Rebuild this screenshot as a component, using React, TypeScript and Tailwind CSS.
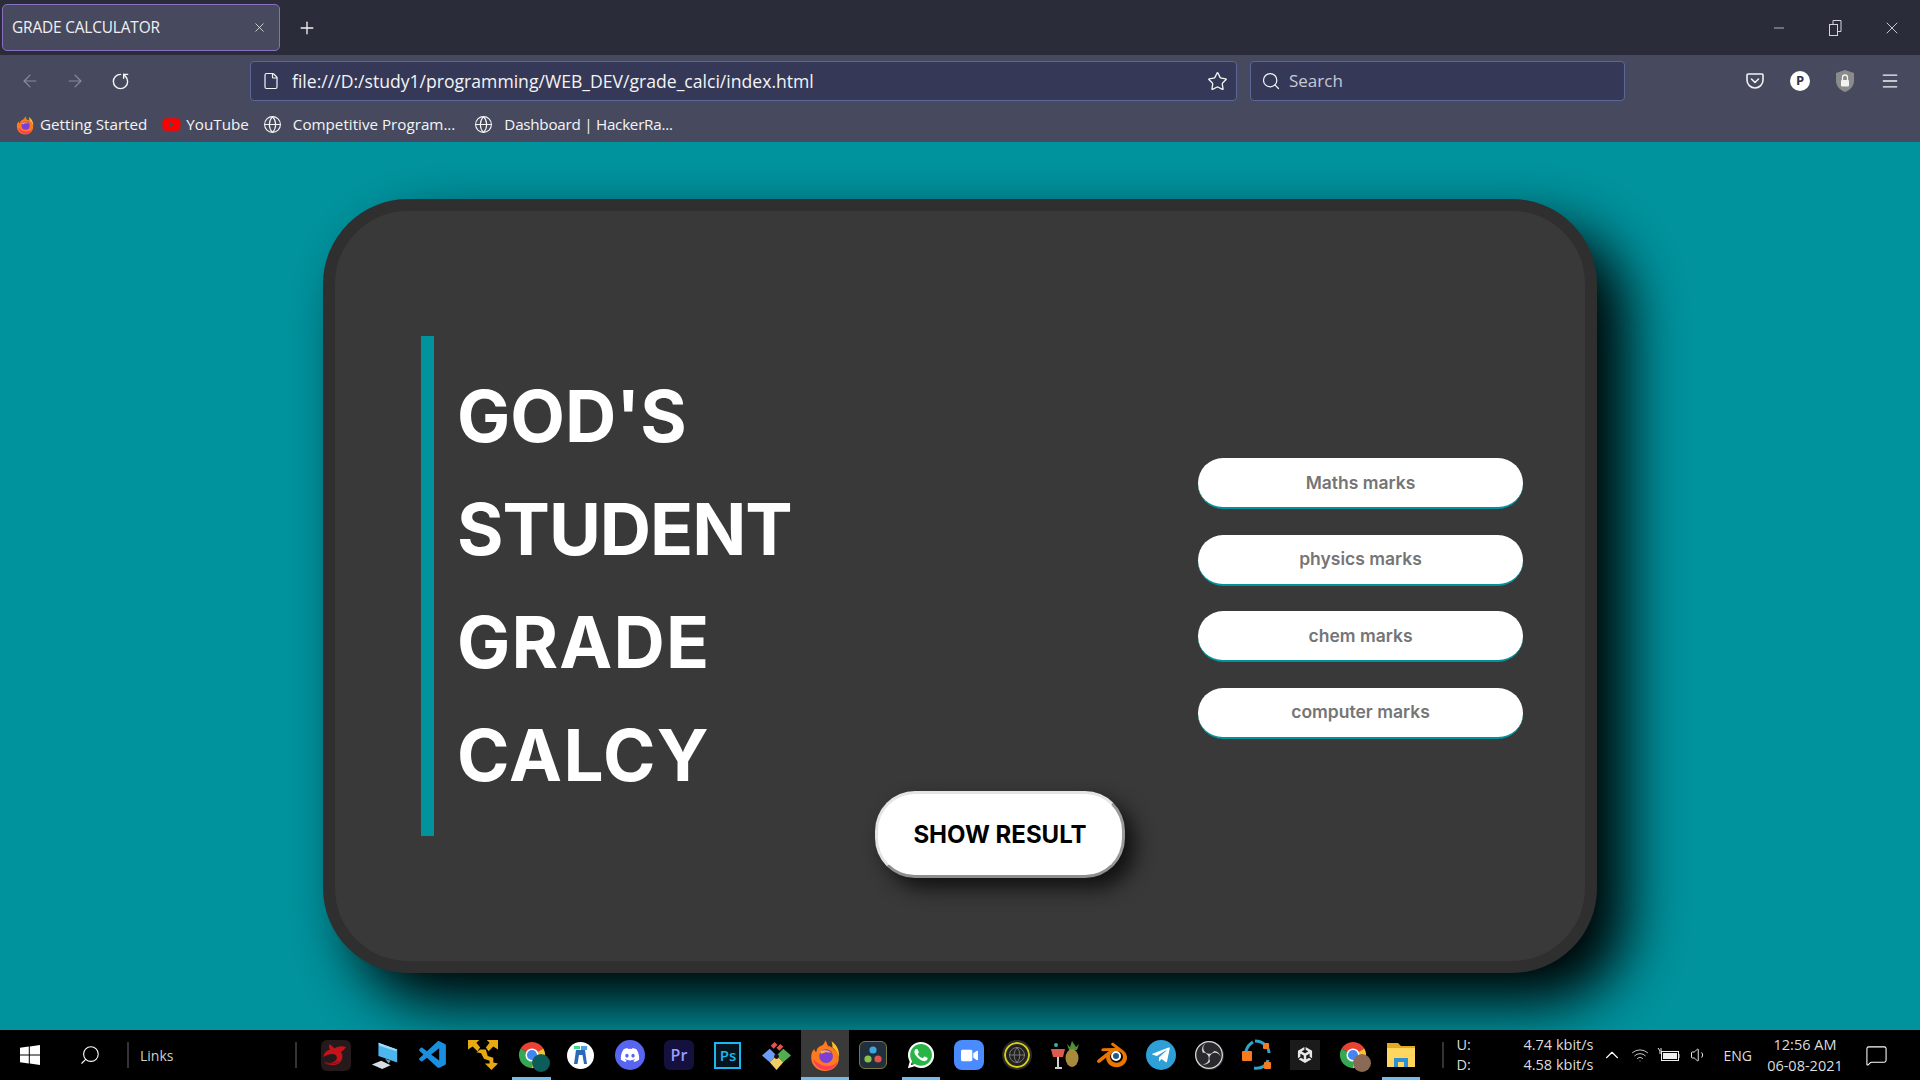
import { ArrowLeft, ArrowRight, RotateCw, File, Star, Search, Menu, Plus, X, Minus, Globe, ChevronUp, Wifi, Volume1, MessageSquare } from "lucide-react";
import { FaDiscord, FaWhatsapp, FaTelegramPlane, FaVideo, FaYoutube } from "react-icons/fa";
import { SiObsstudio, SiBlender, SiUnity } from "react-icons/si";
import { VscVscode } from "react-icons/vsc";

const uiFont = "font-['Open_Sans','Noto_Sans',sans-serif]";
const pageFont = "font-['Inter','Noto_Sans',sans-serif]";

const FirefoxIcon = ({ size = 34 }: { size?: number }) => (
  <svg width={size} height={size} viewBox="0 0 32 32">
    <path d="M16 2c3 3 1 5 5 6 4 2 8 6 8 11 0 7-6 12-13 12S3 26 3 18c0-3 1-6 3-8 0 2 1 3 2 3 0-4 3-5 5-6 2-1 3-3 3-5z" fill="#ff7a1f" />
    <path d="M22 3c5 3 8 9 7 15-1-4-3-7-6-9 0-2 0-4-1-6z" fill="#ffbd2e" />
    <path d="M5 20c1 6 6 10 12 10 5 0 9-3 11-8-3 4-8 5-13 4-4-1-7-3-10-6z" fill="#ff3d5a" />
    <circle cx="17" cy="17" r="6.5" fill="#7b3fd6" />
    <path d="M11 13c3-2 8-2 11 1-3-1-7-1-9 1z" fill="#ffb02e" />
  </svg>
);

const ChromeIcon = ({ badge }: { badge: string }) => (
  <div className="relative h-[30px] w-[30px]">
    <svg width="30" height="30" viewBox="0 0 32 32">
      <path d="M16 16 L3.9 9 A14 14 0 0 1 28.1 9 Z" fill="#ea4335" />
      <path d="M16 16 L28.1 9 A14 14 0 0 1 16 30 Z" fill="#fbc02d" />
      <path d="M16 16 L16 30 A14 14 0 0 1 3.9 9 Z" fill="#34a853" />
      <circle cx="16" cy="16" r="7" fill="#fff" />
      <circle cx="16" cy="16" r="5.4" fill="#4285f4" />
    </svg>
    <div className={`absolute bottom-[-2px] right-[-3px] h-[18px] w-[18px] rounded-full ${badge}`} />
  </div>
);

const MsiIcon = () => (
  <div className="flex h-[31px] w-[30px] items-center justify-center rounded-md bg-[#26191b]">
    <svg width="27" height="28" viewBox="0 0 24 26">
      <path d="M6 3c3 1 4 3 5 4 3-2 7-3 11-1-2 1-2 3-5 4 2 3 2 7-1 10-3 3-9 3-13 1 4 0 8-1 10-4 1-3-1-5-4-5-3 0-6 1-8 3 0-4 3-6 6-7C6 7 6 5 6 3z" fill="#c5131c" />
      <path d="M2 20c5 2 10 1 13-1" fill="none" stroke="#8c1016" strokeWidth="1.4" />
    </svg>
  </div>
);

const ComputerIcon = () => (
  <svg width="30" height="30" viewBox="0 0 32 32">
    <path d="M9 3l20 7v14L9 17z" fill="#4cb6ef" />
    <path d="M9 3l20 7-1 2L10 6z" fill="#9fdcf8" />
    <path d="M16 20l6 2-2 3z" fill="#8b9aa5" />
    <path d="M2 26l10-4 10 5-9 4z" fill="#d7dde2" />
  </svg>
);

const YellowArrowsIcon = () => (
  <svg width="30" height="30" viewBox="0 0 32 32" fill="#e6a912">
    <path d="M0 0h12l-3 3 4 5-3 4-5-5-5 3zM32 0H20l3 3-4 5 3 4 5-5 5 3zM13 10h6l2 7 6 2v5l5 1-7 7-7-7h5v-3l-6-2-3-6-5-1z" />
  </svg>
);

const WriterIcon = () => (
  <div className="flex h-[27px] w-[27px] items-center justify-center rounded-full bg-white">
    <svg width="17" height="20" viewBox="0 0 17 20">
      <path d="M2 1h6v3H2z" fill="#3ddc84" />
      <path d="M9 1h6v4H9z" fill="#4fa0e0" />
      <path d="M4 5h9l2 14h-3l-1.500-9h-3.500l-1.500 9H2z" fill="#2a69b5" />
    </svg>
  </div>
);

const DiscordIcon = () => (
  <div className="flex h-[30px] w-[30px] items-center justify-center rounded-full bg-[#5865f2]">
    <FaDiscord size={20} color="#fff" />
  </div>
);

const PremiereIcon = () => (
  <div className={`flex h-[30px] w-[30px] items-center justify-center rounded-md bg-[#14113e] text-[16px] font-semibold text-[#9c9cff] ${uiFont}`}>Pr</div>
);

const PhotoshopIcon = () => (
  <div className={`flex h-[27px] w-[27px] items-center justify-center border-2 border-[#1fb6ef] bg-[#04141f] text-[15px] font-semibold text-[#1fb6ef] ${uiFont}`}>Ps</div>
);

const GitKrakenIcon = () => (
  <svg width="31" height="31" viewBox="0 0 32 32">
    <path d="M9 9l7 7-7 7-8-7z" fill="#6d9cf5" />
    <path d="M23 9l8 7-8 7-7-7z" fill="#4fae4f" />
    <path d="M9 23l7-7 7 7-7 8z" fill="#f2ce6a" />
    <path d="M10 6l4-4 3 3-4 4zM16 8l4-4 3 3-4 4z" fill="#e2534f" />
    <circle cx="16" cy="17" r="2.5" fill="#111" />
  </svg>
);

const ResolveIcon = () => (
  <div className="flex h-[28px] w-[28px] items-center justify-center rounded-md border border-[#7a7a3a] bg-[#21303c]">
    <svg width="20" height="20" viewBox="0 0 20 20">
      <circle cx="10" cy="5" r="3.6" fill="#3aa7e0" />
      <circle cx="5" cy="14" r="3.6" fill="#8bc34a" />
      <circle cx="15" cy="14" r="3.6" fill="#e2534f" />
    </svg>
  </div>
);

const WhatsappIcon = () => (
  <div className="relative flex h-[30px] w-[30px] items-center justify-center">
    <div className="absolute h-[25px] w-[25px] rounded-full bg-[#28b446]" />
    <FaWhatsapp size={30} color="#fff" className="relative" />
  </div>
);

const ZoomIcon = () => (
  <div className="flex h-[30px] w-[30px] items-center justify-center rounded-lg bg-[#4a8cff]">
    <FaVideo size={17} color="#fff" />
  </div>
);

const GlobeRingIcon = () => (
  <div className="flex h-[26px] w-[26px] items-center justify-center rounded-full border-2 border-[#d8ce18] bg-[#222] outline-2 outline-[#2a2a2a]">
    <Globe size={18} color="#8f8f8f" strokeWidth={1} />
  </div>
);

const PineappleIcon = () => (
  <svg width="30" height="32" viewBox="0 0 30 32">
    <path d="M22 2l-2 6-3-3 2 6h8l2-6-3 3z" fill="#4f8f3a" />
    <ellipse cx="22" cy="19" rx="6.5" ry="9" fill="#a78a3a" />
    <path d="M1 10h14l-2 8H3z" fill="#dd5a4f" />
    <path d="M7 18h2v10h3v2H5v-2h2z" fill="#cfcfcf" />
    <circle cx="6" cy="6" r="2" fill="#2fb4a8" />
  </svg>
);

const BlenderIcon = () => (
  <div className="relative h-[30px] w-[32px]">
    <SiBlender size={30} color="#ea7600" />
    <div className="absolute left-[14px] top-[11px] h-[10px] w-[10px] rounded-full border-2 border-white bg-[#265787]" />
  </div>
);

const TelegramIcon = () => (
  <div className="flex h-[30px] w-[30px] items-center justify-center rounded-full bg-[#2f9fd8]">
    <FaTelegramPlane size={20} color="#fff" />
  </div>
);

const ObsIcon = () => (
  <div className="flex h-[29px] w-[29px] items-center justify-center rounded-full bg-[#2a2a2e]">
    <SiObsstudio size={28} color="#d8d8d8" />
  </div>
);

const SyncIcon = () => (
  <svg width="32" height="34" viewBox="0 0 32 34">
    <path d="M6 22C3 16 5 8 12 4" fill="none" stroke="#2fa6c9" strokeWidth="3" />
    <path d="M14 3c8 0 14 6 14 12" fill="none" stroke="#2fa6c9" strokeWidth="3" />
    <path d="M27 22c-1 6-7 9-14 8" fill="none" stroke="#2fa6c9" strokeWidth="3" />
    <rect x="1" y="13" width="10" height="10" rx="1" fill="#f47b20" />
    <rect x="22" y="5" width="6" height="6" rx="1" fill="#f47b20" />
    <rect x="23" y="24" width="7" height="7" rx="1" fill="#f47b20" />
  </svg>
);

const UnityIcon = () => (
  <div className="flex h-[30px] w-[30px] items-center justify-center bg-[#1b1b1b]">
    <SiUnity size={16} color="#e8e8e8" />
  </div>
);

const FilesIcon = () => (
  <svg width="30" height="28" viewBox="0 0 30 28">
    <path d="M1 2h11l3 3h14v21H1z" fill="#e6a820" />
    <rect x="1" y="7" width="28" height="19" fill="#ffd75e" />
    <path d="M8 26v-9h14v9h-4v-5h-6v5z" fill="#2f8fd6" />
  </svg>
);

const PocketIcon = () => (
  <svg width="20" height="20" viewBox="0 0 20 20" fill="none" stroke="#f2f2f2" strokeWidth="1.6" strokeLinecap="round" strokeLinejoin="round">
    <path d="M3 3h14a1 1 0 0 1 1 1v5a8 8 0 0 1-16 0V4a1 1 0 0 1 1-1z" />
    <path d="M6.5 8l3.5 3.500L13.500 8" />
  </svg>
);

const ShieldIcon = () => (
  <svg width="20" height="24" viewBox="0 0 20 24">
    <path d="M10 1l9 3v8c0 5-4 9-9 11-5-2-9-6-9-11V4z" fill="#8b8b8b" />
    <rect x="6" y="11" width="8" height="6.5" rx="1" fill="#f2f2f2" />
    <path d="M7.5 11V8.5a2.5 2.5 0 0 1 5 0V11" fill="none" stroke="#f2f2f2" strokeWidth="1.3" />
  </svg>
);

const WindowsIcon = () => (
  <svg width="20" height="20" viewBox="0 0 20 20" fill="#fff">
    <path d="M0 2.800l8.800-1.200v8H0zM9.800 1.400L20 0v9.600H9.800zM0 10.600h8.800v8L0 17.300zM9.800 10.600H20V20L9.800 18.600z" />
  </svg>
);

const RestoreIcon = () => (
  <svg width="13" height="18" viewBox="0 0 13 18" fill="none" stroke="#d4d5dc" strokeWidth="1">
    <rect x="0.5" y="5.5" width="8" height="11" />
    <path d="M4 5V1.500h8v11H9" />
  </svg>
);

const BatteryIcon = () => (
  <svg width="24" height="16" viewBox="0 0 24 16" fill="none" stroke="#eee">
    <rect x="4.5" y="4.5" width="17" height="9" />
    <rect x="6" y="6" width="14" height="6" fill="#eee" stroke="none" />
    <path d="M22 7v4M1 1l2 3v3M4 1v3" />
  </svg>
);

const taskbarApps = [
  { icon: <MsiIcon /> },
  { icon: <ComputerIcon /> },
  { icon: <VscVscode size={33} color="#1a8fe0" /> },
  { icon: <YellowArrowsIcon /> },
  { icon: <ChromeIcon badge="bg-[#0d5c5c]" />, line: true },
  { icon: <WriterIcon /> },
  { icon: <DiscordIcon /> },
  { icon: <PremiereIcon /> },
  { icon: <PhotoshopIcon /> },
  { icon: <GitKrakenIcon /> },
  { icon: <FirefoxIcon />, active: true },
  { icon: <ResolveIcon /> },
  { icon: <WhatsappIcon />, line: true },
  { icon: <ZoomIcon /> },
  { icon: <GlobeRingIcon /> },
  { icon: <PineappleIcon /> },
  { icon: <BlenderIcon /> },
  { icon: <TelegramIcon /> },
  { icon: <ObsIcon /> },
  { icon: <SyncIcon /> },
  { icon: <UnityIcon /> },
  { icon: <ChromeIcon badge="bg-[#8a6a55]" /> },
  { icon: <FilesIcon />, line: true },
];

const subjects = ["Maths marks", "physics marks", "chem marks", "computer marks"];

// Inter runs a little off Poppins per word, so each line gets its own tracking
const titleLines = [
  { text: "GOD'S", tracking: "tracking-[0px]" },
  { text: "STUDENT", tracking: "tracking-[-1px]" },
  { text: "GRADE", tracking: "tracking-[1.2px]" },
  { text: "CALCY", tracking: "tracking-[1.4px]" },
];

const Browser = () => (
  <div className={`shrink-0 ${uiFont}`}>
    <div className="flex h-[55px] items-start bg-[#2b2c39] text-[#f1f1f4]">
      <div className="mt-[4px] ml-[2px] flex h-[47px] w-[278px] items-center justify-between rounded-[5px] border border-[#8a6fc0] bg-[#474a5e] pl-[9px] pr-[12px] text-[15.4px] tracking-[-0.15px]">
        <span>GRADE CALCULATOR</span>
        <X size={15} strokeWidth={1.2} />
      </div>
      <div className="mt-[18px] ml-[17px]">
        <Plus size={20} strokeWidth={1.6} />
      </div>
      <div className="ml-auto flex h-[55px] items-center text-[#d4d5dc]">
        <div className="flex w-[57px] justify-center"><Minus size={16} strokeWidth={1.2} /></div>
        <div className="flex w-[56px] justify-center"><RestoreIcon /></div>
        <div className="flex w-[57px] justify-center"><X size={20} strokeWidth={1.1} /></div>
      </div>
    </div>
    <div className="bg-[#474a5e] text-[#f4f4f6]">
      <div className="flex h-[52px] items-center">
        <div className="flex w-[250px] items-center pl-[20px]">
          <ArrowLeft size={20} strokeWidth={1.4} color="#8a8c9c" />
          <ArrowRight size={20} strokeWidth={1.4} color="#8a8c9c" className="ml-[25px]" />
          <RotateCw size={19} strokeWidth={1.8} className="ml-[26px] -scale-x-100 rotate-90" />
        </div>
        <div className="flex h-[40px] w-[987px] items-center rounded-[4px] border border-[#5b6798] bg-[#353957] pl-[11px] pr-[8px] text-[17.6px]">
          <File size={18} strokeWidth={1.6} />
          <span className="ml-[12px] flex-1">file:///D:/study1/programming/WEB_DEV/grade_calci/index.html</span>
          <Star size={21} strokeWidth={1.5} />
        </div>
        <div className="ml-[13px] flex h-[40px] w-[375px] items-center rounded-[4px] border border-[#5b6798] bg-[#353957] pl-[10px] text-[17px] text-[#c7c9d6]">
          <Search size={20} strokeWidth={1.5} color="#f4f4f6" />
          <span className="ml-[8px]">Search</span>
        </div>
        <div className="ml-[120px] flex items-center">
          <PocketIcon />
          <div className="ml-[25px] flex h-[20px] w-[20px] items-center justify-center rounded-full bg-white text-[13px] font-bold text-[#33354a]">P</div>
          <div className="ml-[25px]"><ShieldIcon /></div>
          <Menu size={20} strokeWidth={1.6} className="ml-[25px]" />
        </div>
      </div>
      <div className="flex h-[35px] items-center pl-[15px] text-[15.2px]">
        <FirefoxIcon size={20} />
        <span className="ml-[5px]">Getting Started</span>
        <FaYoutube size={19} color="#ff0000" className="ml-[15px]" />
        <span className="ml-[5px]">YouTube</span>
        <Globe size={19} strokeWidth={1.4} className="ml-[14px]" />
        <span className="ml-[11px]">Competitive Program...</span>
        <Globe size={19} strokeWidth={1.4} className="ml-[19px]" />
        <span className="ml-[11px] tracking-[-0.25px]">Dashboard | HackerRa...</span>
      </div>
    </div>
  </div>
);

const Taskbar = () => (
  <div className={`flex h-[50px] shrink-0 items-center bg-black text-white ${uiFont}`}>
    <div className="ml-[20px]"><WindowsIcon /></div>
    <Search size={22} strokeWidth={1.2} className="ml-[39px] -scale-x-100" />
    <div className="ml-[26px] h-[26px] w-[2px] border-x border-[#333]" />
    <span className="ml-[11px] text-[14px] text-[#cfcfcf]">Links</span>
    <div className="ml-[122px] h-[26px] w-[2px] border-x border-[#333]" />
    <div className="ml-[14px] flex h-full">
      {taskbarApps.map((app, i) => (
        <div key={i} className={`relative flex h-full items-center justify-center ${i < 10 ? "w-[49px]" : "w-[48px]"} ${app.active ? "bg-[#3a3a3a]" : ""}`}>
          {app.icon}
          {(app.active || app.line) && (
            <div className={`absolute bottom-0 h-[3px] bg-[#76b9ed] ${app.active ? "inset-x-0" : "inset-x-[5px]"}`} />
          )}
        </div>
      ))}
    </div>
    <div className="ml-[17px] h-[26px] w-[2px] border-x border-[#333]" />
    <div className="ml-[12px] flex w-[137px] flex-col text-[14.5px] leading-[20px] text-[#dcdcdc]">
      <div className="flex justify-between"><span>U:</span><span>4.74 kbit/s</span></div>
      <div className="flex justify-between"><span>D:</span><span>4.58 kbit/s</span></div>
    </div>
    <ChevronUp size={22} strokeWidth={1.2} className="ml-[8px]" />
    <Wifi size={18} strokeWidth={1.3} color="#c8c8c8" className="ml-[8px]" />
    <div className="ml-[8px]"><BatteryIcon /></div>
    <Volume1 size={18} strokeWidth={1.2} className="ml-[9px]" />
    <span className="ml-[15px] text-[14px] text-[#dcdcdc]">ENG</span>
    <div className="ml-[11px] flex w-[84px] flex-col items-center text-[14.5px] leading-[21px] text-[#dcdcdc]">
      <span>12:56 AM</span>
      <span>06-08-2021</span>
    </div>
    <MessageSquare size={23} strokeWidth={1.1} className="ml-[18px]" />
  </div>
);

const GradeCard = () => (
  <div className={`flex h-[774px] w-[1274px] items-start rounded-[85px] border-[12px] border-[#2f2f2f] bg-[#393939] shadow-[30px_30px_60px_#000] ${pageFont}`}>
    <div className="mt-[125px] ml-[86px] flex h-[500px] w-[454px] flex-col justify-center border-l-[13px] border-[#00939e] pl-[23px]">
      {titleLines.map((line) => (
        <div key={line.text} className={`text-[71px] leading-[113px] font-bold text-white ${line.tracking}`}>{line.text}</div>
      ))}
    </div>
    <button className="mt-[580px] flex h-[87px] w-[250px] items-center justify-center rounded-[40px] border-[3px] border-t-[#e4e4e4] border-r-[#9a9a9a] border-b-[#8f8f8f] border-l-[#e4e4e4] bg-white pt-[1px] text-[24px] font-bold text-black shadow-[10px_10px_20px_#111]">
      SHOW RESULT
    </button>
    <div className="mt-[247px] ml-[73px] flex w-[325px] flex-col gap-[25.5px]">
      {subjects.map((subject) => (
        <div key={subject} className="flex h-[51px] items-center justify-center rounded-[25px] border-b-2 border-[#00939e] bg-white pt-[1px] text-[17.5px] font-semibold text-[#757575]">
          {subject}
        </div>
      ))}
    </div>
  </div>
);

export default function App() {
  return (
    <div className="flex h-[1080px] w-[1920px] flex-col overflow-hidden bg-[#00939e]">
      <Browser />
      <main className="flex flex-1 justify-start pt-[57px] pl-[323px]">
        <GradeCard />
      </main>
      <Taskbar />
    </div>
  );
}
